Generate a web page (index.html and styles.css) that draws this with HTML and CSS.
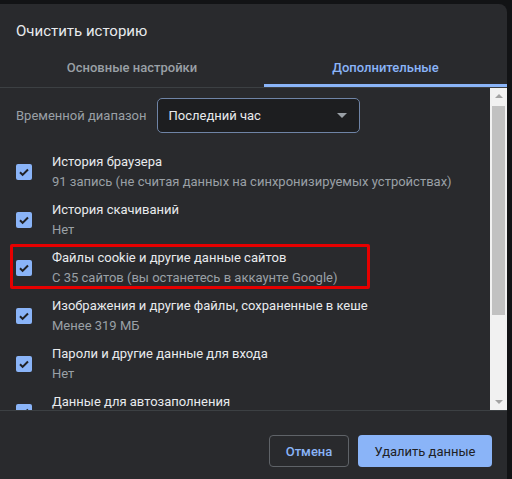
FILE: index.html
```html
<!DOCTYPE html>
<html lang="ru">
<head>
  <meta charset="UTF-8">
  <title>Очистить историю</title>
  <link rel="stylesheet" href="styles.css">
</head>
<body>
  <div class="dialog">
    <div class="dialog-title">Очистить историю</div>

    <!-- tabs -->
    <div class="tabs">
      <div class="tab tab-basic">Основные настройки</div>
      <div class="tab active">Дополнительные</div>
    </div>

    <!-- scrolling body -->
    <div class="body">
      <div class="content">
        <div class="range-row">
          <span class="range-label">Временной диапазон</span>
          <div class="select">
            <span>Последний час</span>
            <span class="caret"></span>
          </div>
        </div>

        <div class="list">
          <div class="item">
            <span class="cb"><svg viewBox="0 0 16 16"><path d="M4 8.3l2.6 2.6L12 5.5"/></svg></span>
            <div class="item-text">
              <div class="item-title">История браузера</div>
              <div class="item-sub">91 запись (не считая данных на синхронизируемых устройствах)</div>
            </div>
          </div>
          <div class="item">
            <span class="cb"><svg viewBox="0 0 16 16"><path d="M4 8.3l2.6 2.6L12 5.5"/></svg></span>
            <div class="item-text">
              <div class="item-title">История скачиваний</div>
              <div class="item-sub">Нет</div>
            </div>
          </div>
          <div class="item marked">
            <span class="cb"><svg viewBox="0 0 16 16"><path d="M4 8.3l2.6 2.6L12 5.5"/></svg></span>
            <div class="item-text">
              <div class="item-title">Файлы cookie и другие данные сайтов</div>
              <div class="item-sub">С 35 сайтов (вы останетесь в аккаунте Google)</div>
            </div>
          </div>
          <div class="item">
            <span class="cb"><svg viewBox="0 0 16 16"><path d="M4 8.3l2.6 2.6L12 5.5"/></svg></span>
            <div class="item-text">
              <div class="item-title">Изображения и другие файлы, сохраненные в кеше</div>
              <div class="item-sub">Менее 319 МБ</div>
            </div>
          </div>
          <div class="item">
            <span class="cb"><svg viewBox="0 0 16 16"><path d="M4 8.3l2.6 2.6L12 5.5"/></svg></span>
            <div class="item-text">
              <div class="item-title">Пароли и другие данные для входа</div>
              <div class="item-sub">Нет</div>
            </div>
          </div>
          <div class="item">
            <span class="cb"><svg viewBox="0 0 16 16"><path d="M4 8.3l2.6 2.6L12 5.5"/></svg></span>
            <div class="item-text">
              <div class="item-title">Данные для автозаполнения</div>
              <div class="item-sub">&nbsp;</div>
            </div>
          </div>
        </div>
      </div>

      <!-- classic scrollbar -->
      <div class="scrollbar">
        <span class="arrow up"></span>
        <div class="track"><div class="thumb"></div></div>
        <span class="arrow down"></span>
      </div>
    </div>

    <!-- footer -->
    <div class="footer">
      <button class="btn btn-cancel">Отмена</button>
      <button class="btn btn-primary">Удалить данные</button>
    </div>
  </div>
</body>
</html>
```

FILE: styles.css
```css
*{box-sizing:border-box}
html,body{margin:0;height:100%}
body{background:#121315;font-family:Roboto,"Noto Sans",Arial,sans-serif;font-size:13px;color:#e8eaed;overflow:hidden}

.dialog{width:507px;height:475px;margin-top:4px;background:#292a2d;border-radius:0 8px 0 0;display:flex;flex-direction:column}
.dialog-title{padding:17px 16px 0;font-size:15px;line-height:20px;color:#e8eaed}

/* tabs */
.tabs{display:flex;margin-top:6px;border-bottom:1px solid #3c4043}
.tab{height:40px;display:flex;align-items:center;justify-content:center;font-weight:500;color:#9aa0a6}
.tab-basic{width:264px}
.tab.active{flex:1;color:#8ab4f8;box-shadow:inset 0 -3px #8ab4f8}

/* body */
.body{height:322px;display:flex;overflow:hidden}
.content{flex:1;padding:10px 0 0 16px;overflow:hidden}
.range-row{display:flex;align-items:center;gap:11px}
.range-label{color:#9aa0a6}
.select{width:203px;height:35px;display:flex;align-items:center;justify-content:space-between;
  padding:0 10px;background:#1d1e20;border:1px solid #6f84a6;border-radius:5px;color:#e8eaed}
.caret{width:0;height:0;border-left:5px solid transparent;border-right:5px solid transparent;border-top:5px solid #9aa0a6;margin-right:2px}

.list{margin-top:15px}
.item{position:relative;display:flex;align-items:center;gap:20px;padding:4px 0;height:48px}
.cb{width:16px;height:16px;flex:none;background:#8ab4f8;border-radius:2px;display:flex}
.cb svg{width:16px;height:16px;fill:none;stroke:#202124;stroke-width:2}
.item-title{line-height:20px;color:#e8eaed}
.item-sub{line-height:20px;color:#9aa0a6}
/* screenshot annotation */
.item.marked::after{content:"";position:absolute;top:0;left:-6px;width:354px;height:39px;border:3px solid #e60000;border-radius:2px}

/* scrollbar */
.scrollbar{width:17px;margin-left:auto;background:#f1f1f1;display:flex;flex-direction:column;align-items:center}
.arrow{width:0;height:0;border-left:4px solid transparent;border-right:4px solid transparent;margin:6px 0}
.arrow.up{border-bottom:4px solid #a3a3a3}
.arrow.down{border-top:4px solid #a3a3a3}
.track{flex:1;width:100%;padding:0 2px}
.thumb{height:209px;margin-top:2px;background:#c1c1c1}

/* footer */
.footer{border-top:1px solid #3c4043;display:flex;justify-content:flex-end;gap:9px;padding:24px 15px 0}
.btn{height:32px;border-radius:4px;font:500 13px Roboto,"Noto Sans",Arial,sans-serif;cursor:pointer}
.btn-cancel{width:80px;background:transparent;border:1px solid #5f6368;color:#8ab4f8}
.btn-primary{width:134px;background:#8ab4f8;border:none;color:#202124;font-weight:400}
```
